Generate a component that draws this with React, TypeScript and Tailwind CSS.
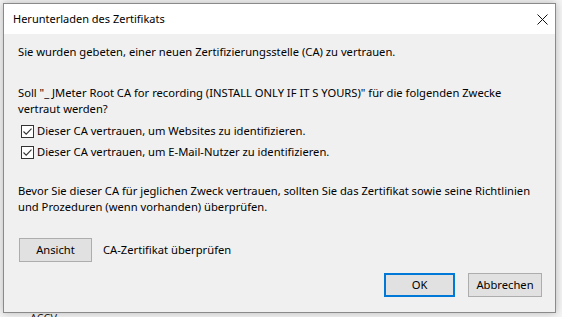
import React from "react";

function Check() {
  return (
    <span className="flex h-[13px] w-[13px] shrink-0 items-center justify-center border border-[#333] bg-white">
      <svg width="11" height="11" viewBox="0 0 11 11">
        <path d="M1.5 5.5 L4.2 8.2 L9.5 2.6" fill="none" stroke="#333" strokeWidth="1.1" />
      </svg>
    </span>
  );
}

export default function App() {
  return (
    <div
      className="relative h-[317px] w-[562px] overflow-hidden bg-[#f4f4f4] text-[11.2px] text-black"
      style={{ fontFamily: '"Noto Sans", "Open Sans", sans-serif' }}
    >
      <div className="pl-[3px] pt-[3px]">
        <div className="flex h-[310px] w-[553px] flex-col border border-[#8a8a8a] bg-[#f0f0f0] shadow-[0_0_8px_rgba(0,0,0,0.25)]">
          <div className="flex h-[30px] items-center justify-between bg-white pl-[9px] pr-[7px]">
            <span className="text-[11px]">Herunterladen des Zertifikats</span>
            <svg width="11" height="11" viewBox="0 0 11 11">
              <path d="M0.5 0.5 L10.5 10.5 M10.5 0.5 L0.5 10.5" stroke="#111" strokeWidth="1" />
            </svg>
          </div>
          <div className="flex flex-1 flex-col whitespace-nowrap pl-[14px] pr-[13px]">
            <p className="mt-[10px] leading-[16px]">
              Sie wurden gebeten, einer neuen Zertifizierungsstelle (CA) zu vertrauen.
            </p>
            <p className="mt-[25px] leading-[16px]">
              Soll "_ JMeter Root CA for recording (INSTALL ONLY IF IT S YOURS)" für die folgenden Zwecke
              <br />
              vertraut werden?
            </p>
            <div className="mt-[7px] flex flex-col gap-[7px] pl-[3px]">
              <label className="flex h-[14px] items-center gap-[3px]">
                <Check />
                <span>Dieser CA vertrauen, um Websites zu identifizieren.</span>
              </label>
              <label className="flex h-[14px] items-center gap-[3px]">
                <Check />
                <span>Dieser CA vertrauen, um E-Mail-Nutzer zu identifizieren.</span>
              </label>
            </div>
            <p className="mt-[24px] leading-[16px]">
              Bevor Sie dieser CA für jeglichen Zweck vertrauen, sollten Sie das Zertifikat sowie seine Richtlinien
              <br />
              und Prozeduren (wenn vorhanden) überprüfen.
            </p>
            <div className="mt-[23px] flex items-center gap-[11px] pl-[1px]">
              <button className="h-[24px] w-[73px] border border-[#adadad] bg-[#e1e1e1]">Ansicht</button>
              <span>CA-Zertifikat überprüfen</span>
            </div>
            <div className="mt-[11px] flex justify-end gap-[13px]">
              <button className="h-[24px] w-[71px] border-2 border-[#0078d7] bg-[#e1e1e1]">OK</button>
              <button className="h-[24px] w-[74px] border border-[#adadad] bg-[#e1e1e1]">Abbrechen</button>
            </div>
          </div>
        </div>
      </div>
      <span className="absolute left-[30px] top-[312px] text-[11px] leading-[12px] text-[#222]">ACCV</span>
    </div>
  );
}
